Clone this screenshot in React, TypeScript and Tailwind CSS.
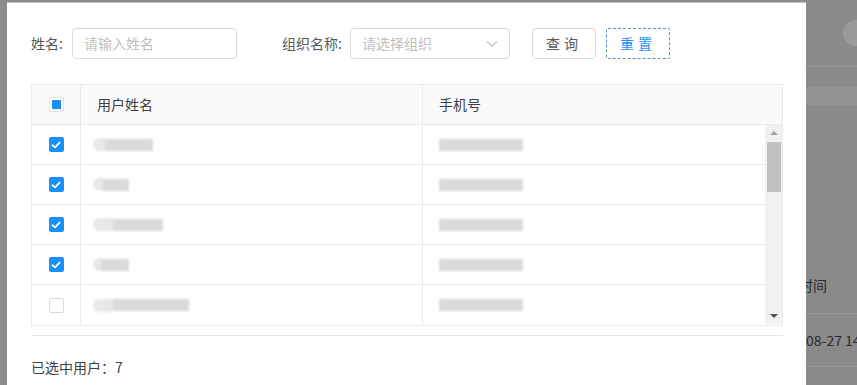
import React from 'react';

interface Row {
  checked: boolean;
  name: number[];
  phone: number[];
}

const rows: Row[] = [
  { checked: true, name: [12, 48], phone: [84] },
  { checked: true, name: [10, 26], phone: [84] },
  { checked: true, name: [20, 50], phone: [84] },
  { checked: true, name: [8, 28], phone: [84] },
  { checked: false, name: [20, 76], phone: [84] },
];

const Check = ({ checked }: { checked: boolean }) =>
  checked ? (
    <span className="flex h-[15px] w-[15px] items-center justify-center rounded-[2px] bg-[#1890ff]">
      <svg width="10" height="8" viewBox="0 0 10 8" fill="none">
        <path d="M1.5 4.2 L4 6.4 L8.6 1.6" stroke="white" strokeWidth="1.8" strokeLinecap="round" strokeLinejoin="round" />
      </svg>
    </span>
  ) : (
    <span className="block h-[15px] w-[15px] rounded-[2px] border border-[#d9d9d9] bg-white" />
  );

// smudged placeholder for the blurred personal data
const Smudge = ({ parts }: { parts: number[] }) => (
  <div className="flex items-center blur-[0.8px]">
    {parts.map((w, i) => (
      <span
        key={i}
        className={i === 0 && parts.length > 1 ? 'h-[13px] rounded-l-full bg-[#e8e8e8]' : 'h-[12px] bg-[#dadada]'}
        style={{ width: w }}
      />
    ))}
  </div>
);

export default function App() {
  return (
    <div className="flex h-[385px] w-[857px] overflow-hidden bg-[#8a8a8a] font-['Noto_Sans_CJK_SC','Noto_Sans',sans-serif] text-[14px] text-[#595959]">
      <div className="w-[7px] shrink-0 bg-[#8b8b8b]" />

      <div className="mt-[2px] flex w-[799px] shrink-0 flex-col border-t border-[#c4c4c4] bg-white pl-[24px] pr-[23px] pt-[25px]">
        {/* search form */}
        <div className="flex h-[31px] items-center">
          <span className="w-[41px]">姓名:</span>
          <div className="flex h-[31px] w-[165px] items-center rounded-[4px] border border-[#d9d9d9] px-[11px] text-[#bfbfbf]">请输入姓名</div>
          <span className="ml-[45px] w-[68px]">组织名称:</span>
          <div className="flex h-[31px] w-[160px] items-center justify-between rounded-[4px] border border-[#d9d9d9] pl-[11px] pr-[11px] text-[#bfbfbf]">
            <span>请选择组织</span>
            <svg width="12" height="8" viewBox="0 0 12 8" fill="none">
              <path d="M1 1.5 L6 6.2 L11 1.5" stroke="#bfbfbf" strokeWidth="1.2" />
            </svg>
          </div>
          <button className="ml-[22px] h-[31px] w-[64px] rounded-[4px] border border-[#d9d9d9] bg-white tracking-[4px] text-[#595959]">查询</button>
          <button className="ml-[10px] h-[31px] w-[64px] rounded-[2px] border border-dashed border-[#5a8fc4] bg-white tracking-[4px] text-[#1890ff]">重置</button>
        </div>

        {/* table */}
        <div className="mt-[25px] w-[752px] border border-[#ebebeb]">
          <div className="flex h-[40px] border-b border-[#ebebeb] bg-[#fafafa] text-[#404040]">
            <div className="flex w-[49px] items-center justify-center border-r border-[#ebebeb]">
              <span className="flex h-[15px] w-[15px] items-center justify-center rounded-[2px] border border-[#e5e5e5] bg-white">
                <span className="h-[9px] w-[9px] bg-[#1890ff]" />
              </span>
            </div>
            <div className="flex w-[342px] items-center border-r border-[#ebebeb] pl-[16px]">用户姓名</div>
            <div className="flex flex-1 items-center pl-[16px]">手机号</div>
          </div>
          <div className="flex">
            <div className="flex-1">
              {rows.map((r, i) => (
                <div key={i} className={`flex h-[40px] ${i < rows.length - 1 ? 'border-b border-[#ebebeb]' : ''}`}>
                  <div className="flex w-[49px] items-center justify-center border-r border-[#ebebeb]">
                    <Check checked={r.checked} />
                  </div>
                  <div className="flex w-[342px] items-center border-r border-[#ebebeb] pl-[12px]">
                    <Smudge parts={r.name} />
                  </div>
                  <div className="flex flex-1 items-center pl-[16px]">
                    <Smudge parts={r.phone} />
                  </div>
                </div>
              ))}
            </div>
            {/* scrollbar */}
            <div className="flex h-[199px] w-[17px] flex-col items-center bg-[#f1f1f1]">
              <svg className="mt-[5px]" width="8" height="5" viewBox="0 0 8 5">
                <path d="M0 5 L4 1 L8 5 Z" fill="#a3a3a3" />
              </svg>
              <div className="mt-[7px] h-[50px] w-[14px] bg-[#c1c1c1]" />
              <div className="flex-1" />
              <svg className="mb-[5px]" width="8" height="5" viewBox="0 0 8 5">
                <path d="M0 0 L4 4 L8 0 Z" fill="#505050" />
              </svg>
            </div>
          </div>
        </div>
        <div className="mt-[9px] h-px w-[752px] bg-[#e8e8e8]" />
        <div className="mt-[21px] text-[#404040]">已选中用户：7</div>
      </div>

      {/* dimmed page behind the modal */}
      <div className="flex flex-1 flex-col overflow-hidden text-[#2a2a2a]">
        <div className="flex h-[66px] items-center justify-end">
          <span className="mr-[-12px] h-[26px] w-[26px] rounded-full bg-[#9a9a9a]" />
        </div>
        <div className="h-px bg-[#959595]" />
        <div className="mt-[20px] h-[18px] bg-[#929292]" />
        <div className="ml-[-7px] flex h-[192px] items-end pb-[1px]">时间</div>
        <div className="mt-[16px] h-px bg-[#959595]" />
        <div className="flex h-[52px] items-center whitespace-nowrap">08-27 14</div>
        <div className="h-px bg-[#959595]" />
      </div>
    </div>
  );
}
